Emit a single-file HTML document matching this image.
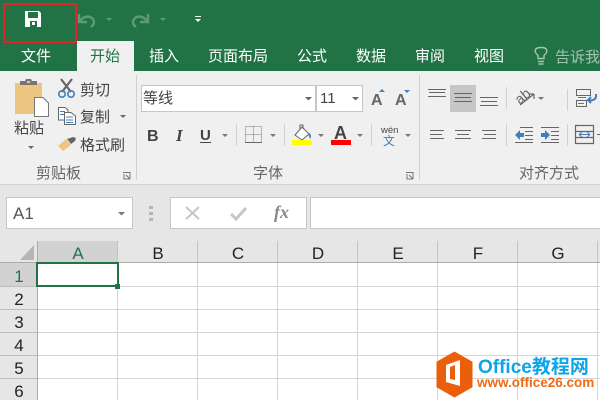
<!DOCTYPE html>
<html><head><meta charset="utf-8"><style>
html,body{margin:0;padding:0;width:600px;height:400px;overflow:hidden;background:#fff}
svg{display:block}
text{font-family:"Liberation Sans","Noto Sans CJK SC",sans-serif}
.t{font-size:15px;fill:#fff}
.r{font-size:15px;fill:#444}
.g{font-size:15px;fill:#666}
.h{font-size:17px;fill:#222;text-anchor:middle}
.l{stroke:#666;stroke-width:1;fill:none}
</style></head><body>
<svg width="600" height="400" viewBox="0 0 600 400" xmlns="http://www.w3.org/2000/svg">
<rect width="600" height="71" fill="#217346"/>
<rect x="77" y="41" width="57" height="30" fill="#f0f0f0"/>
<rect x="0" y="71" width="600" height="114" fill="#f0f0f0"/>
<rect x="0" y="185" width="600" height="56" fill="#e6e6e6"/>
<rect x="0" y="184" width="600" height="1" fill="#d2d2d2"/>
<rect x="4" y="4" width="72" height="38" fill="none" stroke="#e0222a" stroke-width="2"/>
<path d="M25 11H39L41 13V27H25Z" fill="#fff"/><rect x="28" y="12" width="10" height="6" fill="#217346"/><path d="M30 21H37V27H30Z" fill="#217346"/><rect x="32" y="22" width="3" height="3" fill="#fff"/>
<path d="M79 14V22H87M80 21C84 15 93 15 94 22C94 25 92 26 91 27" fill="none" stroke="#5d9a7a" stroke-width="2.4"/>
<path d="M106 18H112L109 21Z" fill="#5d9a7a"/>
<path d="M148 14V22H140M147 21C143 15 134 15 133 22C133 25 135 26 136 27" fill="none" stroke="#5d9a7a" stroke-width="2.4"/>
<path d="M160 18H166L163 21Z" fill="#5d9a7a"/>
<rect x="195" y="16" width="6" height="1" fill="#fff"/><path d="M195 19H201L198 22Z" fill="#fff"/>
<text class="t" x="21" y="61">文件</text>
<text x="90" y="61" font-size="15" fill="#217346">开始</text>
<text class="t" x="149" y="61">插入</text>
<text class="t" x="208" y="61">页面布局</text>
<text class="t" x="297" y="61">公式</text>
<text class="t" x="356" y="61">数据</text>
<text class="t" x="415" y="61">审阅</text>
<text class="t" x="474" y="61">视图</text>
<path d="M538 61.500H544M538.500 64H543.500M538 58.500H544V55.500C549 51 547 47.500 541 47.500C535 47.500 533 51 538 55.500Z" fill="none" stroke="#a3c4b2" stroke-width="1.4"/>
<text x="555" y="62" font-size="15" fill="#a3c4b2">告诉我</text>
<rect x="136" y="75" width="1" height="105" fill="#d0d0d0"/>
<rect x="419" y="75" width="1" height="105" fill="#d0d0d0"/>
<rect x="15" y="83" width="27" height="31" fill="#ecc581"/>
<path d="M20 85V81H25L26 79H31L32 81H37V85Z" fill="#767676"/><rect x="27" y="81" width="3" height="2" fill="#ecc581"/>
<path d="M34.500 97.500H43L48.500 103V116.500H34.500Z" fill="#fff" stroke="#767676"/>
<text class="r" x="14" y="133">粘贴</text><path d="M28 146H34L31 149Z" fill="#666"/>
<path d="M61 79L71 92M72 79L62 92" stroke="#666" stroke-width="2.2" fill="none"/><circle cx="62" cy="94" r="3.200" fill="none" stroke="#3f7fbf" stroke-width="1.600"/><circle cx="71" cy="94" r="3.200" fill="none" stroke="#3f7fbf" stroke-width="1.600"/>
<text class="r" x="80" y="95">剪切</text>
<path d="M58.500 107.500H65L68 110V120H58.500Z" fill="#fff" stroke="#666"/><path d="M60 111.500H65M60 114.500H64" stroke="#3f7fbf"/><path d="M64.500 112.500H71L75.500 116V124.500H64.500Z" fill="#fff" stroke="#666"/><path d="M66 117H73M66 120H73M66 122.500H73" stroke="#3f7fbf"/>
<text class="r" x="80" y="122">复制</text><path d="M120 115H126L123 118Z" fill="#666"/>
<path d="M58 146L66 139L71 145L63 151Z" fill="#ecc581"/><path d="M67 139L73 137L76 138L75 141L71 144Z" fill="#666"/>
<text class="r" x="80" y="150">格式刷</text>
<text class="g" x="36" y="178">剪贴板</text><path d="M123 172.500H130V179M124 174V179H130M126 175L130 179" fill="none" stroke="#777"/>
<rect x="141.500" y="85.500" width="174" height="26" fill="#fff" stroke="#c6c6c6"/>
<text x="143" y="103" font-size="15" fill="#444">等线</text><path d="M305 97H312L308.500 100.500Z" fill="#666"/>
<rect x="316.500" y="85.500" width="46" height="26" fill="#fff" stroke="#c6c6c6"/>
<text x="320" y="103" font-size="15" fill="#444">11</text><path d="M352 97H359L355.500 100.500Z" fill="#666"/>
<text x="371" y="105" font-size="16" font-weight="bold" fill="#666">A</text><path d="M379 92H385L382 89Z" fill="#3f7fbf"/>
<text x="395" y="105" font-size="16" font-weight="bold" fill="#666">A</text><path d="M404 90H410L407 93Z" fill="#3f7fbf"/>
<text x="147" y="141" font-size="16" font-weight="bold" fill="#444">B</text>
<text x="176" y="141" font-size="17" font-weight="bold" font-style="italic" fill="#444" style="font-family:'Liberation Serif',serif">I</text>
<text x="200" y="140" font-size="15" font-weight="bold" fill="#444">U</text><rect x="200" y="142" width="11" height="1" fill="#444"/>
<path d="M222 134H228L225 137Z" fill="#777"/><rect x="236" y="124" width="1" height="22" fill="#d0d0d0"/>
<path d="M245.500 126.500H261.500V142.500H245.500ZM253.500 126.500V142.500M245.500 134.500H261.500" fill="none" stroke="#777" stroke-dasharray="1 1"/><rect x="245" y="142" width="17" height="1" fill="#666"/>
<path d="M270 134H276L273 137Z" fill="#777"/><rect x="284" y="124" width="1" height="22" fill="#d0d0d0"/>
<path d="M295 135L302 127L309 134L302 140Z" fill="#fff" stroke="#666"/><path d="M309 133C312 135 311 137 310 139C309 137 309 135 308 134Z" fill="#3f7fbf"/><path d="M300 129V125H303V129" fill="none" stroke="#666"/>
<rect x="292" y="140" width="20" height="5" fill="#ffff00"/>
<path d="M318 134H324L321 137Z" fill="#777"/>
<text x="334" y="139" font-size="18" font-weight="bold" fill="#444">A</text>
<rect x="331" y="140" width="20" height="5" fill="#ff0000"/>
<path d="M357 134H363L360 137Z" fill="#777"/><rect x="371" y="124" width="1" height="22" fill="#d0d0d0"/>
<text x="381" y="133" font-size="9.500" fill="#444">wén</text>
<text x="383" y="145" font-size="12" fill="#3f7fbf">文</text>
<path d="M405 134H411L408 137Z" fill="#777"/>
<text class="g" x="253" y="178">字体</text><path d="M406 172.500H413V179M407 174V179H413M409 175L413 179" fill="none" stroke="#777"/>
<rect x="450" y="85" width="26" height="27" fill="#c6c6c6"/>
<path class="l" d="M428 89.500H446M429 92.500H445M428 96.500H446"/>
<path class="l" d="M454 93.500H472M455 97.500H471M454 101.500H472"/>
<path class="l" d="M480 97.500H498M481 101.500H497M480 105.500H498"/>
<rect x="506" y="87" width="1" height="22" fill="#d0d0d0"/>
<text x="515" y="100" font-size="14" fill="#666" transform="rotate(-40 524 96)">ab</text><path d="M520 105L534 94M534 94H529M534 94V99" fill="none" stroke="#666" stroke-width="1.200"/>
<path d="M538 97H544L541 100Z" fill="#777"/><rect x="567" y="89" width="1" height="22" fill="#d0d0d0"/>
<path class="l" d="M430 130.500H444M430 134.500H442M430 138.500H444"/>
<path class="l" d="M455 130.500H471M457 134.500H469M455 138.500H471"/>
<path class="l" d="M482 130.500H496M484 134.500H496M482 138.500H496"/>
<rect x="506" y="124" width="1" height="22" fill="#d0d0d0"/>
<path class="l" d="M520 127.500H533M525 131.500H533M525 135.500H533M525 139.500H533M515 142.500H533"/>
<path d="M515 135L520 130V133H524V137H520V140Z" fill="#3f7fbf"/>
<path class="l" d="M541 127.500H559M551 131.500H559M551 135.500H559M551 139.500H559M541 142.500H559"/>
<path d="M550 135L545 130V133H541V137H545V140Z" fill="#3f7fbf"/>
<rect x="567" y="124" width="1" height="22" fill="#d0d0d0"/>
<path d="M576.500 89.500H590.500V95.500H576.500ZM576.500 100.500H586.500V106.500H576.500Z" fill="none" stroke="#666"/><path d="M578 97.500H586M578 103.500H584" stroke="#3f7fbf"/><path d="M596 94C597 100 592 101 588 100M591 97L588 100L591 103" fill="none" stroke="#3f7fbf" stroke-width="2"/>
<path d="M575.500 125.500H593.500V143.500H575.500ZM575.500 131.500H593.500M575.500 137.500H593.500" fill="none" stroke="#666" stroke-width="1.200"/><path d="M579 134.500H590M579 134.500L582 132M579 134.500L582 137M590 134.500L587 132M590 134.500L587 137" fill="none" stroke="#3f7fbf"/>
<path d="M597 134.500H600" stroke="#666"/>
<text class="g" x="519" y="178">对齐方式</text>
<rect x="6.500" y="197.500" width="126" height="31" fill="#fff" stroke="#c6c6c6"/>
<text x="13" y="219" font-size="17" fill="#555">A1</text><path d="M118 212H125L121.500 215.500Z" fill="#777"/>
<rect x="149" y="206" width="4" height="3" fill="#b5b5b5"/><rect x="149" y="212" width="4" height="3" fill="#b5b5b5"/><rect x="149" y="218" width="4" height="3" fill="#b5b5b5"/>
<rect x="170.500" y="197.500" width="136" height="31" fill="#fff" stroke="#c6c6c6"/>
<rect x="310.500" y="197.500" width="290" height="31" fill="#fff" stroke="#c6c6c6"/>
<path d="M186 207L199 219M199 207L186 219" stroke="#c6c6c6" stroke-width="2" fill="none"/>
<path d="M231 214L236 219L246 208" stroke="#c6c6c6" stroke-width="3" fill="none"/>
<text x="274" y="218" font-size="18" font-style="italic" font-weight="bold" fill="#888" style="font-family:'Liberation Serif',serif">fx</text>
<rect x="0" y="241" width="600" height="22" fill="#e6e6e6"/>
<rect x="0" y="263" width="37" height="137" fill="#e6e6e6"/>
<rect x="0" y="263" width="37" height="24" fill="#d2d2d2"/>
<path d="M20 260H34V245Z" fill="#b5b5b5"/>
<path d="M117.500 241V400M197.500 241V400M277.500 241V400M357.500 241V400M437.500 241V400M517.500 241V400M597.500 241V400" stroke="#d4d4d4"/>
<path d="M0 286.500H600M0 309.500H600M0 332.500H600M0 355.500H600M0 378.500H600" stroke="#d4d4d4"/>
<path d="M117.500 241V263M197.500 241V263M277.500 241V263M357.500 241V263M437.500 241V263M517.500 241V263M597.500 241V263" stroke="#c4c4c4"/>
<rect x="37" y="241" width="80" height="22" fill="#d2d2d2"/>
<rect x="0" y="262" width="600" height="1" fill="#ababab"/>
<path d="M0 286.500H37M0 309.500H37M0 332.500H37M0 355.500H37M0 378.500H37" stroke="#bdbdbd"/>
<rect x="37" y="241" width="1" height="159" fill="#ababab"/>
<text class="h" x="78" y="259" style="fill:#217346">A</text>
<text class="h" x="158" y="259">B</text><text class="h" x="238" y="259">C</text><text class="h" x="318" y="259">D</text><text class="h" x="398" y="259">E</text><text class="h" x="478" y="259">F</text><text class="h" x="558" y="259">G</text>
<text class="h" x="19" y="282" style="fill:#217346">1</text><text class="h" x="19" y="305">2</text><text class="h" x="19" y="328">3</text><text class="h" x="19" y="351">4</text><text class="h" x="19" y="374">5</text><text class="h" x="19" y="397">6</text>
<rect x="37" y="263" width="81" height="23" fill="#fff" stroke="#217346" stroke-width="2"/>
<rect x="115" y="284" width="5" height="5" fill="#217346"/>
<path d="M454.500 352L472 362V387L454.500 397L437 387V362Z" fill="#eb5f0c" stroke="#eb5f0c" stroke-linejoin="round"/>
<path d="M446 365L460 360V386L446 382ZM450 367V379L455 380V365Z" fill="#fff" fill-rule="evenodd"/>
<text x="478" y="373" font-size="19" font-weight="bold" fill="#0ea4e8">Office教程网</text>
<text x="477" y="387" font-size="13.500" font-weight="bold" fill="#ee6a14">www.office26.com</text>
</svg>
</body></html>
